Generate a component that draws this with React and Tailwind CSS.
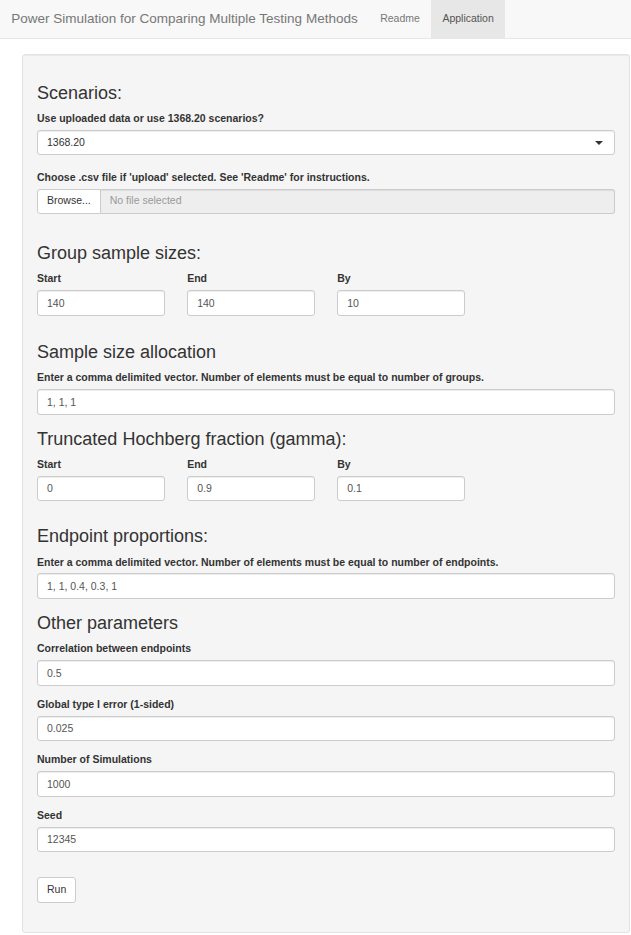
import React from "react";

const font = "font-['Liberation_Sans',Arial,Helvetica,sans-serif]";

function Heading({ children, className = "" }) {
  return (
    <h3 className={`text-[18px] leading-[19.8px] font-normal text-[#333] ${className}`}>
      {children}
    </h3>
  );
}

function Label({ children, className = "" }) {
  return (
    <label className={`block text-[10.5px] leading-[15px] font-bold text-[#333] ${className}`}>
      {children}
    </label>
  );
}

function TextInput({ value }) {
  return (
    <input
      type="text"
      defaultValue={value}
      className={`block w-full h-[25.5px] mt-[3.75px] px-[9px] bg-white border border-[#ccc] rounded-[3px] shadow-[inset_0_1px_1px_rgba(0,0,0,0.075)] text-[10.5px] text-[#555] outline-none ${font}`}
    />
  );
}

function Field({ label, value, className = "" }) {
  return (
    <div className={className}>
      <Label>{label}</Label>
      <TextInput value={value} />
    </div>
  );
}

function RangeRow({ start, end, by, className = "" }) {
  const cols = [
    ["Start", start],
    ["End", end],
    ["By", by],
  ];
  return (
    <div className={`grid grid-cols-4 gap-x-[22.5px] ${className}`}>
      {cols.map(([label, value]) => (
        <Field key={label} label={label} value={value} />
      ))}
    </div>
  );
}

export default function App() {
  return (
    <div className={`w-[631px] min-h-[935px] bg-white text-[#333] ${font}`}>
      {/* navbar */}
      <nav className="flex h-[38.5px] bg-[#f8f8f8] border-b border-[#e7e7e7]">
        <span className="px-[11.25px] pt-[11.25px] text-[13.5px] leading-[15px] text-[#777]">
          Power Simulation for Comparing Multiple Testing Methods
        </span>
        <a className="px-[11.25px] pt-[11.25px] text-[10.5px] leading-[15px] text-[#777]">
          Readme
        </a>
        <a className="px-[11.25px] pt-[11.25px] text-[10.5px] leading-[15px] text-[#555] bg-[#e7e7e7]">
          Application
        </a>
      </nav>

      {/* sidebar well */}
      <div className="ml-[22px] mt-[15px] w-[608px] flex flex-col bg-[#f5f5f5] border border-[#e3e3e3] rounded-[3px] shadow-[inset_0_1px_1px_rgba(0,0,0,0.05)] px-[14px] pt-[14.25px] pb-[14.25px]">
        <Heading className="mt-[15px]">Scenarios:</Heading>
        <Label className="mt-[7.5px]">Use uploaded data or use 1368.20 scenarios?</Label>
        <div className="mt-[3.75px] h-[25.5px] flex items-center justify-between px-[9px] bg-white border border-[#ccc] rounded-[3px] shadow-[inset_0_1px_1px_rgba(0,0,0,0.075)]">
          <span className="text-[10.5px] text-[#333]">1368.20</span>
          <span className="w-0 h-0 mr-[2px] border-x-[4px] border-t-[4px] border-x-transparent border-t-[#333]" />
        </div>

        <Label className="mt-[15px]">
          Choose .csv file if 'upload' selected. See 'Readme' for instructions.
        </Label>
        <div className="mt-[3.75px] h-[24.5px] flex">
          <button className={`px-[9px] bg-white border border-[#ccc] rounded-l-[3px] text-[10.5px] text-[#333] ${font}`}>
            Browse...
          </button>
          <div className="flex-1 flex items-center px-[9px] bg-[#eee] border border-l-0 border-[#ccc] rounded-r-[3px] shadow-[inset_0_1px_1px_rgba(0,0,0,0.075)] text-[10.5px] text-[#999]">
            No file selected
          </div>
        </div>

        <Heading className="mt-[30.5px]">Group sample sizes:</Heading>
        <RangeRow className="mt-[7.5px]" start="140" end="140" by="10" />

        <Heading className="mt-[27.5px]">Sample size allocation</Heading>
        <Field
          className="mt-[7.5px]"
          label="Enter a comma delimited vector. Number of elements must be equal to number of groups."
          value="1, 1, 1"
        />

        <Heading className="mt-[15px]">Truncated Hochberg fraction (gamma):</Heading>
        <RangeRow className="mt-[7.5px]" start="0" end="0.9" by="0.1" />

        <Heading className="mt-[26.25px]">Endpoint proportions:</Heading>
        <Field
          className="mt-[7.5px]"
          label="Enter a comma delimited vector. Number of elements must be equal to number of endpoints."
          value="1, 1, 0.4, 0.3, 1"
        />

        <Heading className="mt-[15px]">Other parameters</Heading>
        <Field className="mt-[7.5px]" label="Correlation between endpoints" value="0.5" />
        <Field className="mt-[11.25px]" label="Global type I error (1-sided)" value="0.025" />
        <Field className="mt-[11.25px]" label="Number of Simulations" value="1000" />
        <Field className="mt-[11.25px]" label="Seed" value="12345" />

        <div className="mt-[24.25px] mb-[15px]">
          <button className={`h-[25.5px] px-[9px] bg-white border border-[#ccc] rounded-[3px] text-[10.5px] text-[#333] ${font}`}>
            Run
          </button>
        </div>
      </div>
    </div>
  );
}
